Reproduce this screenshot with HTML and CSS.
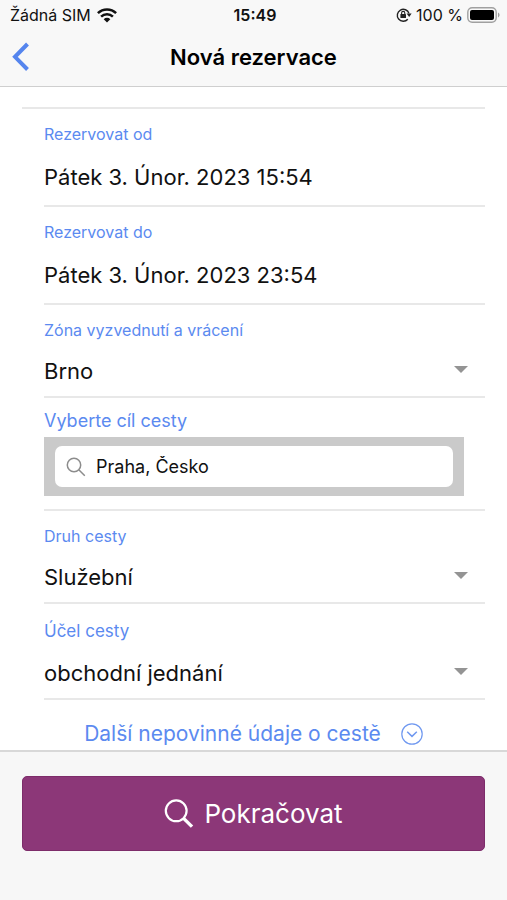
FILE: index.html
```html
<!DOCTYPE html>
<html lang="cs">
<head>
<meta charset="utf-8">
<meta name="viewport" content="width=device-width, initial-scale=1">
<title>Nová rezervace</title>
<link rel="stylesheet" href="styles.css">
</head>
<body>
<header class="top">
  <div class="status">
    <div class="status-left">
      <span>Žádná SIM</span>
      <svg class="wifi" viewBox="0 0 20 15" aria-hidden="true"><g fill="none" stroke="#111" stroke-width="2.5"><path d="M.9 5.2a13 13 0 0 1 18.2 0"/><path d="M4.1 8.7a8.4 8.4 0 0 1 11.8 0"/></g><path d="M10 14.6 6.7 11.2a4.7 4.7 0 0 1 6.6 0z" fill="#111"/></svg>
    </div>
    <strong class="clock">15:49</strong>
    <div class="status-right">
      <svg class="lock" viewBox="0 0 16 16" aria-hidden="true"><path d="M11.8 12.3A6 6 0 1 1 13 6.4" fill="none" stroke="#222" stroke-width="1.4"/><path d="M10.6 6.6h5l-2.4 3.4z" fill="#222"/><rect x="4.4" y="7" width="5.6" height="4" rx=".6" fill="#222"/><path d="M5.6 7.2V6a1.6 1.6 0 0 1 3.2 0v1.2" fill="none" stroke="#222" stroke-width="1.1"/></svg>
      <span>100 %</span>
      <svg class="battery" viewBox="0 0 33 16" aria-hidden="true"><rect x=".8" y=".8" width="28.4" height="14.4" rx="4.4" fill="none" stroke="#a0a0a0" stroke-width="1.4"/><rect x="3" y="3" width="24" height="10" rx="2" fill="#000"/><path d="M31 5.6c2 .8 2 4 0 4.8z" fill="#a0a0a0"/></svg>
    </div>
  </div>
  <nav class="bar">
    <a class="back" href="#" aria-label="Zpět"><svg viewBox="0 0 18 30" aria-hidden="true"><path d="M15.5 2 3 14.8l12.5 12.7" fill="none" stroke="#5585ee" stroke-width="4"/></svg></a>
    <h1>Nová rezervace</h1>
  </nav>
</header>
<main>
  <form id="booking" class="form">
    <div class="field date">
      <label for="from">Rezervovat od</label>
      <input id="from" type="text" readonly value="Pátek 3. Únor. 2023 15:54">
    </div>
    <div class="field date">
      <label for="to">Rezervovat do</label>
      <input id="to" type="text" readonly value="Pátek 3. Únor. 2023 23:54">
    </div>
    <div class="field choice">
      <label for="zone">Zóna vyzvednutí a vrácení</label>
      <div class="select"><select id="zone"><option>Brno</option></select></div>
    </div>
    <div class="field target">
      <label for="target">Vyberte cíl cesty</label>
      <div class="search">
        <div class="search-box">
          <svg viewBox="0 0 20 20" aria-hidden="true"><g fill="none" stroke="#8c8c8c" stroke-width="1.5"><circle cx="8" cy="8" r="6.7"/><path d="m12.8 12.8 6 6"/></g></svg>
          <input id="target" type="text" value="Praha, Česko">
        </div>
      </div>
    </div>
    <div class="field choice">
      <label for="kind">Druh cesty</label>
      <div class="select"><select id="kind"><option>Služební</option></select></div>
    </div>
    <div class="field choice purpose">
      <label for="purpose">Účel cesty</label>
      <div class="select"><select id="purpose"><option>obchodní jednání</option></select></div>
    </div>
  </form>
  <button class="more" type="button">
    <span>Další nepovinné údaje o cestě</span>
    <svg viewBox="0 0 22 22" aria-hidden="true"><g fill="none" stroke="#6f98f0" stroke-width="1.2"><circle cx="11" cy="11" r="10.2"/><path d="m6.2 8.8 4.8 4.6 4.8-4.6" stroke-width="1.5"/></g></svg>
  </button>
</main>
<footer>
  <button class="submit" type="submit" form="booking">
    <svg viewBox="0 0 30 30" aria-hidden="true"><g fill="none" stroke="#fff"><circle cx="12.2" cy="11.8" r="10.4" stroke-width="2.2"/><path d="m19.6 19.4 8.4 8.2" stroke-width="3.4"/></g></svg>
    <span>Pokračovat</span>
  </button>
</footer>
</body>
</html>
```
FILE: styles.css
```css
* { box-sizing: border-box; }
body {
  margin: 0;
  height: 100vh;
  display: flex;
  flex-direction: column;
  background: #fff;
  color: #111;
  font-family: Inter, "Liberation Sans", sans-serif;
}
button, input, select { font: inherit; color: inherit; }

.top {
  background: #f8f8f8;
  border-bottom: 1px solid #cfcfcf;
}
.status {
  display: grid;
  grid-template-columns: 1fr auto 1fr;
  align-items: center;
  height: 30px;
  padding: 0 7px 0 10px;
  font-size: 16px;
}
.status-left, .status-right { display: flex; align-items: center; gap: 6px; }
.status-right { justify-content: flex-end; gap: 4px; }
.clock { font-weight: 600; }
.wifi { width: 20px; height: 15px; }
.lock { width: 16px; height: 16px; }
.battery { width: 33px; height: 16px; }

.bar {
  display: grid;
  grid-template-columns: 1fr auto 1fr;
  align-items: center;
  height: 56px;
  padding: 0 12px 2px;
}
.back svg { display: block; width: 18px; height: 30px; }
h1 { margin: 0; font-size: 22px; font-weight: 600; line-height: 28px; color: #000; }

main {
  flex: 1;
  min-height: 0;
  overflow: hidden;
  padding: 20px 22px 0;
}
.form { border-top: 2px solid #e8e8e8; padding-left: 22px; }
.field {
  display: flex;
  flex-direction: column;
  border-bottom: 2px solid #e8e8e8;
}
.field label { font-size: 16px; line-height: 20px; color: #5b8af0; }
.field > input, .field select {
  width: 100%;
  height: 32px;
  padding: 0;
  border: 0;
  outline: 0;
  background: none;
  appearance: none;
  font-size: 22px;
}
.date { padding: 15px 0 12px; gap: 17px; }
.choice { padding: 15px 0 9px; gap: 15px; }
.purpose { padding-top: 17px; gap: 16px; }
.purpose label { font-size: 17px; }
.select { display: flex; align-items: center; padding-right: 17px; }
.select::after {
  content: "";
  flex: none;
  margin-bottom: 4px;
  border: 7px solid transparent;
  border-top-color: #949494;
  border-bottom: 0;
}
.target { padding: 13px 0; gap: 6px; }
.target label { font-size: 18px; }
.search { margin-right: 21px; padding: 9px 11px; background: #cacaca; }
.search-box {
  display: flex;
  align-items: center;
  gap: 10px;
  height: 41px;
  padding: 0 11px;
  background: #fff;
  border-radius: 7px;
}
.search-box svg { flex: none; width: 20px; height: 20px; }
.search-box input {
  flex: 1;
  min-width: 0;
  padding: 0;
  border: 0;
  outline: 0;
  background: none;
  font-size: 18px;
}
.more {
  display: flex;
  align-items: center;
  justify-content: center;
  gap: 20px;
  width: 100%;
  padding: 20px 0 0;
  border: 0;
  background: none;
  color: #5b8af0;
  font-size: 21px;
  line-height: 28px;
}
.more svg { width: 22px; height: 22px; }

footer {
  padding: 24px 22px 49px;
  background: #f7f7f7;
  border-top: 2px solid #d8d8d8;
}
.submit {
  display: flex;
  align-items: center;
  justify-content: center;
  gap: 10px;
  width: 100%;
  height: 75px;
  border: 1px solid #7d2c6a;
  border-radius: 5px;
  background: #8c3778;
  color: #fff;
  font-size: 26px;
}
.submit svg { width: 30px; height: 30px; }
```
